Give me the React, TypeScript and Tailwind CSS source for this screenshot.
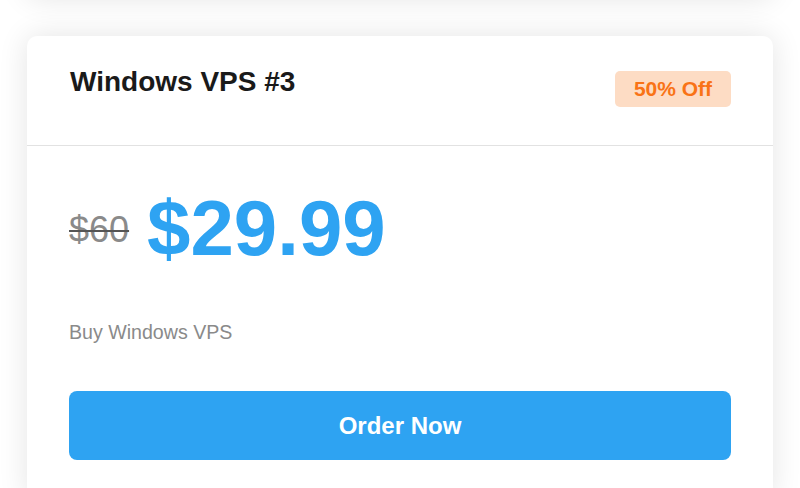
import { Fragment } from 'react';

const font = { fontFamily: '"Liberation Sans", Arial, sans-serif' };

function PlanCard() {
  return (
    <div className="bg-white rounded-[10px] shadow-[0_0_30px_rgba(0,0,0,0.11)]">
      {/* header */}
      <div className="h-[110px] flex items-start justify-between pl-[43px] pr-[42px] pt-[35px] border-b border-[#e2e2e2]">
        <h2 className="text-[28px] leading-[32px] -mt-[5px] font-bold text-[#1a1a1a]">
          Windows VPS #3
        </h2>
        <span className="h-[36px] w-[116px] flex items-center justify-center rounded-[5px] bg-[#fddcc4] text-[#f97316] text-[21px] font-bold">
          50% Off
        </span>
      </div>

      {/* body */}
      <div className="px-[42px] pt-[44px]">
        <div className="flex items-center gap-[18px] h-[77px]">
          <span className="text-[36px] leading-[36px] mt-[2px] text-[#8a8a8a] line-through decoration-[#555] decoration-2">
            $60
          </span>
          <span className="text-[78px] leading-[77px] font-bold text-[#2ea3f2]">
            $29.99
          </span>
        </div>
        <p className="mt-[53px] text-[19.6px] leading-[24px] text-[#8a8a8a]">Buy Windows VPS</p>
        <button className="mt-[47px] w-full h-[69px] rounded-[8px] bg-[#2ea3f2] text-white text-[24px] font-bold">
          Order Now
        </button>
        <div className="h-[40px]" />
      </div>
    </div>
  );
}

export default function App() {
  return (
    <div style={font} className="w-[800px] h-[488px] overflow-hidden bg-white">
      <div className="px-[27px] flex flex-col gap-[38px]">
        <Fragment>
          {/* previous card, mostly scrolled out of view */}
          <div className="-mt-[200px] h-[198px] bg-white rounded-[10px] shadow-[0_0_30px_rgba(0,0,0,0.11)]" />
          <PlanCard />
        </Fragment>
      </div>
    </div>
  );
}
